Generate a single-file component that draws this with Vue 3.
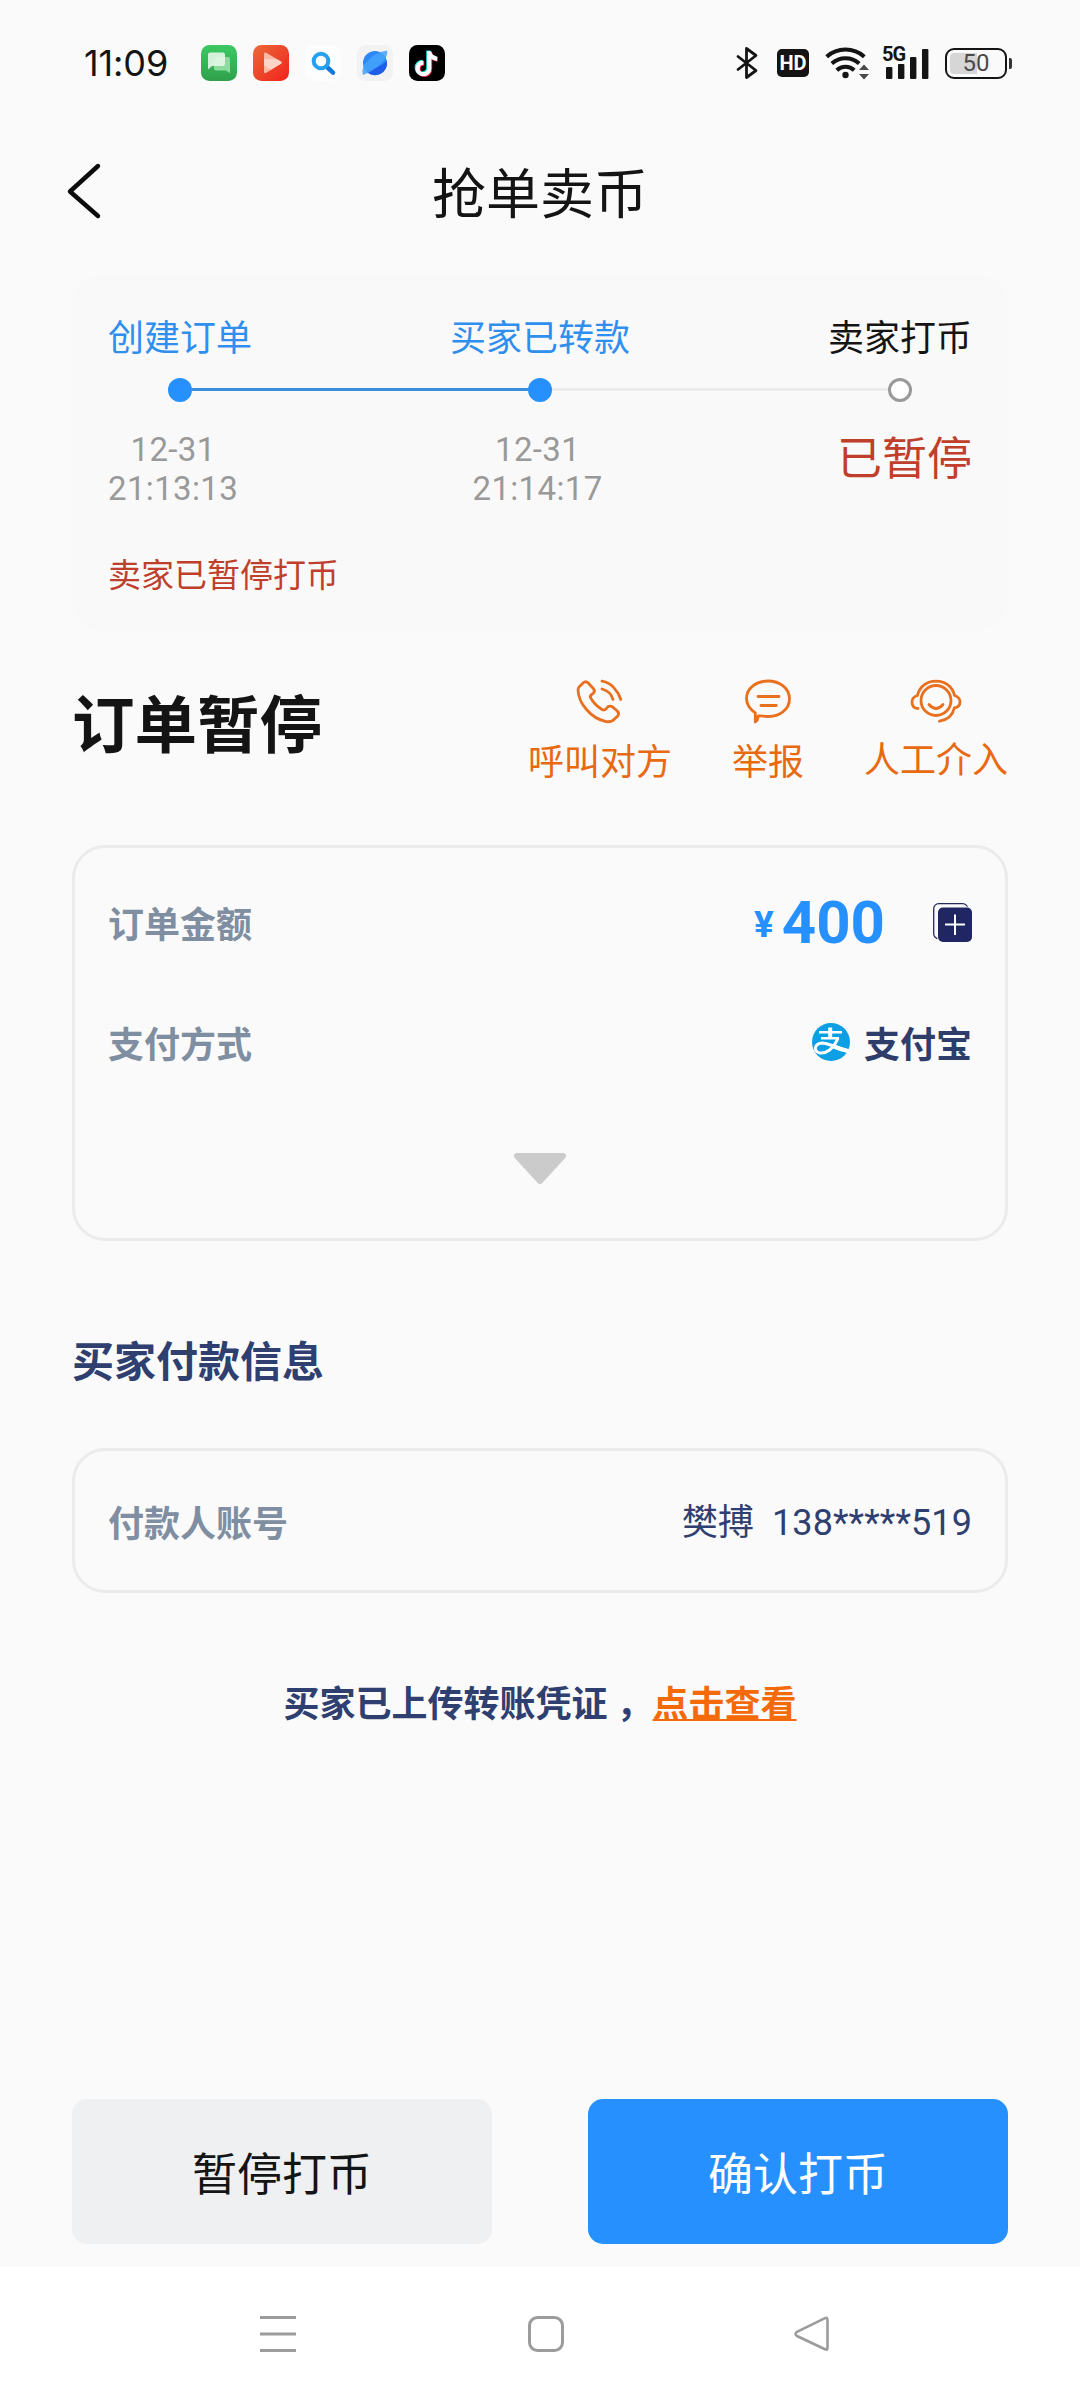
<script setup>
const steps = [
  { label: '创建订单', state: 'done' },
  { label: '买家已转款', state: 'done' },
  { label: '卖家打币', state: 'todo' },
]
</script>

<template>
  <div class="screen">
    <header class="status">
      <span class="clock">11:09</span>
      <div class="apps">
        <svg width="36" height="36" viewBox="0 0 36 36">
          <defs>
            <linearGradient id="msg" x1="0" y1="0" x2="0" y2="1">
              <stop offset="0" stop-color="#3cc864" /><stop offset="1" stop-color="#30a04c" />
            </linearGradient>
          </defs>
          <rect width="36" height="36" rx="8.5" fill="url(#msg)" />
          <path d="M15 12h12a2 2 0 0 1 2 2v14.300l-4-2.900H15a2 2 0 0 1-2-2V14z" fill="#8cdc9f" />
          <path d="M9 7.500h13a2 2 0 0 1 2 2V19a2 2 0 0 1-2 2H11l-4 3.500V9.500a2 2 0 0 1 2-2z" fill="#e2f6e6" fill-opacity=".92" />
        </svg>
        <svg width="36" height="36" viewBox="0 0 36 36">
          <defs>
            <linearGradient id="vid" x1="0" y1="0" x2="1" y2="1">
              <stop offset="0" stop-color="#ea6a38" /><stop offset="1" stop-color="#f0221c" />
            </linearGradient>
          </defs>
          <rect width="36" height="36" rx="8.500" fill="url(#vid)" />
          <path d="M11 9.200q0-2.600 2.300-1.400L28 16.400q1.800 1.200 0 2.400L13.300 27.700Q11 29 11 26.400z" fill="#fbb9a4" />
          <path d="M11 14L24 14.200 28 16.400q1.800 1.200 0 2.400L18 24.800 11 20z" fill="#fff" fill-opacity=".4" />
        </svg>
        <svg width="36" height="36" viewBox="0 0 36 36">
          <rect width="36" height="36" rx="8.500" fill="#fdfdfd" />
          <path d="M22 22l6 5.700" stroke="#1479d8" stroke-width="4.500" stroke-linecap="round" />
          <circle cx="16" cy="16" r="7.300" fill="none" stroke="#26a0f0" stroke-width="4" />
        </svg>
        <svg width="36" height="36" viewBox="0 0 36 36">
          <rect width="36" height="36" rx="8.500" fill="#f2f2f3" />
          <circle cx="18" cy="18" r="12" fill="#2f86f6" />
          <path d="M29.900 16a12 12 0 0 1-20.500 10.400Q22 23 29.900 16z" fill="#1f5cea" />
          <path d="M7 20Q17 7 30 5.600 32 11 24 18.500 15 27 6 30 4.500 26 7 20z" fill="#43a3f8" fill-opacity=".85" />
        </svg>
        <svg width="36" height="36" viewBox="0 0 36 36">
          <rect width="36" height="36" rx="8.500" fill="#000" />
          <g fill="none" stroke-width="4.200">
            <path d="M19.300 5.500v17.200a5.800 5.800 0 1 1-5.800-5.800M19.300 6.500q1.300 5.800 7.700 6.600" stroke="#25e8e4" />
            <path d="M21.100 7v17.200a5.800 5.800 0 1 1-5.800-5.800M21.100 8q1.300 5.800 7.700 6.600" stroke="#fb2c5a" />
            <path d="M20.200 6.200v17.200a5.800 5.800 0 1 1-5.800-5.800M20.200 7q1.300 6 7.900 6.800" stroke="#fff" />
          </g>
        </svg>
      </div>
      <div class="signals">
        <svg class="bt" width="23" height="34" viewBox="0 0 23 34">
          <path d="M2 10.500L20 24.500 10.500 31.500V2.500L20 9.500 2 23.500" fill="none" stroke="#141414" stroke-width="2.800" stroke-linejoin="round" stroke-linecap="round" />
        </svg>
        <span class="hd">HD</span>
        <svg class="wifi" width="46" height="36" viewBox="0 0 46 36">
          <g fill="none" stroke="#141414" stroke-width="4">
            <path d="M1.700 12.700a28.500 28.500 0 0 1 37.600 0" />
            <path d="M6.800 19.600a20.500 20.500 0 0 1 27.400 0" />
            <path d="M11.800 26.300a12.500 12.500 0 0 1 17.400 0" />
          </g>
          <circle cx="20.500" cy="31" r="3.200" fill="#141414" />
          <path d="M34 26l5-5.500 5 5.500zM34 30l5 5.500 5-5.500z" fill="#4a4a4a" />
        </svg>
        <div class="cell">
          <span class="gen">5G</span>
          <svg width="48" height="34" viewBox="0 0 48 34" fill="#141414">
            <rect x="3" y="21" width="6.400" height="12" rx="1" />
            <rect x="15" y="18" width="6.400" height="15" rx="1" />
            <rect x="27" y="11" width="6.400" height="22" rx="1" />
            <rect x="39" y="3" width="6.400" height="30" rx="1" />
          </svg>
        </div>
        <div class="battery"><span class="level"></span><span class="pct">50</span></div>
        <span class="nub"></span>
      </div>
    </header>

    <nav class="titlebar">
      <svg class="back" width="36" height="58" viewBox="0 0 36 58">
        <path d="M32 4L4 29.500 32 54" fill="none" stroke="#0c0c0c" stroke-width="4.400" stroke-linecap="round" stroke-linejoin="round" />
      </svg>
      <h1>抢单卖币</h1>
      <span class="back"></span>
    </nav>

    <section class="progress">
      <div class="labels">
        <span v-for="s in steps" :key="s.label" :class="s.state">{{ s.label }}</span>
      </div>
      <div class="track">
        <i class="dot"></i><i class="bar"></i><i class="dot"></i><i class="bar off"></i><i class="dot off"></i>
      </div>
      <div class="times">
        <span>12-31<br />21:13:13</span>
        <span>12-31<br />21:14:17</span>
        <b>已暂停</b>
      </div>
      <p class="note">卖家已暂停打币</p>
    </section>

    <section class="heading">
      <h2>订单暂停</h2>
      <div class="actions">
        <div class="action">
          <svg width="50" height="46" viewBox="0 0 50 46">
            <path d="M8.300 4.800Q10.700 2.600 13 4.800L18.500 10.700Q20.500 13 18.300 15.300L16.400 16.600Q14.500 18.300 16 20.600 20.500 28 27.500 31.700 29.400 32.500 31 31 L32.600 29Q35.200 27.200 37.500 28.900L42.300 33Q44.800 35.600 42.500 38.300L38 42.400Q35.500 44.200 31 43.600 19.500 41 11.500 31.500 3.500 22.500 3 12 3.200 9.600 4.500 8.500z" />
            <path d="M27 3.200Q34 4.500 38.800 9.600T45.800 21.500M27 11Q36 13.500 38 21.500" />
          </svg>
          <span>呼叫对方</span>
        </div>
        <div class="action">
          <svg width="50" height="46" viewBox="0 0 50 46">
            <path d="M12.300 44V34.800Q3.500 28.500 3.500 20.400C3.500 10 13.500 3 25 3S46.500 10 46.500 20.800 36 39.800 22.500 38.300 19 39 12.300 44z" />
            <path d="M15 18.500H36M18 27.500H33.300" />
          </svg>
          <span>举报</span>
        </div>
        <div class="action">
          <svg width="54" height="46" viewBox="0 0 54 46">
            <circle cx="27" cy="22.500" r="15" />
            <path d="M9 30.500C4 30.500 3 27 3 23.800 3 20 5.500 18.400 8.500 17.500 10.500 8.500 18 3.200 27 3.200S43.500 8.500 45.500 17.500C48.500 18.400 51 20 51 23.800 51 27.500 48.500 29.500 45.300 30 43.500 38 38 42 30.500 43.200M20 26.500Q27 34.500 34 26.500" />
          </svg>
          <span class="up">人工介入</span>
        </div>
      </div>
    </section>

    <section class="card order">
      <div class="row">
        <span class="key">订单金额</span>
        <div class="amount">
          <span class="yen">¥</span><span class="num">400</span>
          <svg width="39" height="39" viewBox="0 0 39 39">
            <rect x=".7" y=".7" width="34" height="35" rx="5" fill="none" stroke="#232a5c" stroke-width="1.300" />
            <rect x="4" y="3.500" width="35.500" height="36" rx="6" fill="#fafafa" />
            <rect x="5" y="4.500" width="34" height="34.500" rx="5" fill="#1f2663" />
            <path d="M12 21.500H32M22 11.500V32" stroke="#fff" stroke-width="2" />
          </svg>
        </div>
      </div>
      <div class="row second">
        <span class="key">支付方式</span>
        <div class="pay">
          <svg width="38" height="38" viewBox="0 0 38 38">
            <circle cx="19" cy="19" r="19" fill="#0c9fe4" />
            <g fill="none" stroke="#fff">
              <path d="M7 9.300H30M9 15.200H27" stroke-width="2.500" />
              <path d="M18.200 4.500V15" stroke-width="4" />
              <path d="M26 15Q23 22.500 17.500 27 13 30.500 8 30 3 29 3.400 24.500 4.500 20 10.500 19.900 14 20 20 22.500 28 26 36.800 28.300" stroke-width="3" />
              <path d="M22 23.500Q29 26.500 36.800 28.300" stroke-width="4.200" />
            </g>
          </svg>
          <span>支付宝</span>
        </div>
      </div>
      <svg class="more" width="54" height="34" viewBox="0 0 54 34">
        <path d="M4 4H50L27 29z" fill="#cbcbcb" stroke="#cbcbcb" stroke-width="6" stroke-linejoin="round" />
      </svg>
    </section>

    <h3>买家付款信息</h3>

    <section class="card payer">
      <span class="key">付款人账号</span>
      <span class="account">樊搏<span class="digits">&nbsp;&nbsp;138*****519</span></span>
    </section>

    <p class="proof">买家已上传转账凭证<span class="gap">&nbsp;</span>，<a>点击查看</a></p>

    <footer class="buttons">
      <button class="pause">暂停打币</button>
      <button class="confirm">确认打币</button>
    </footer>

    <div class="navbar">
      <svg width="40" height="40" viewBox="0 0 40 40">
        <path d="M2 3.500H38M2 20H38M2 36.500H38" />
      </svg>
      <svg width="40" height="40" viewBox="0 0 40 40">
        <rect x="3.500" y="3.500" width="33" height="33" rx="8" />
      </svg>
      <svg width="40" height="40" viewBox="0 0 40 40">
        <path d="M32 4.200Q34.500 2.800 34.500 6V33.500Q34.500 36.800 32 35.200L4 22Q1.200 20 4 17.800z" stroke-width="2.600" />
      </svg>
    </div>
  </div>
</template>

<style>
body {
  margin: 0;
  background: #fafafa;
}
</style>

<style scoped>
.screen {
  width: 1080px;
  height: 2400px;
  box-sizing: border-box;
  overflow: hidden;
  display: flex;
  flex-direction: column;
  background: #fafafa;
  color: #141414;
  font-family: "Noto Sans CJK SC", sans-serif;
}
h1, h2, h3, p {
  margin: 0;
  font-weight: 400;
}
svg {
  display: block;
  flex: none;
}

.status {
  height: 126px;
  box-sizing: border-box;
  padding: 0 68px 0 84px;
  display: flex;
  align-items: center;
  flex: none;
}
.clock {
  width: 117px;
  font: 400 36px/40px Inter, sans-serif;
  letter-spacing: -0.1px;
}
.apps {
  display: flex;
  gap: 16px;
}
.signals {
  margin-left: auto;
  display: flex;
  align-items: center;
}
.bt {
  margin-right: 18px;
}
.hd {
  width: 32px;
  height: 28px;
  margin-right: 16px;
  border-radius: 5px;
  background: #141414;
  color: #fff;
  font: 700 20px/28px Roboto, sans-serif;
  text-align: center;
}
.wifi {
  margin: -3px 12px 0 0;
}
.cell {
  width: 48px;
  height: 34px;
  margin-right: 14px;
  position: relative;
}
.gen {
  position: absolute;
  left: -1px;
  top: -2px;
  font: 700 20px/20px Roboto, sans-serif;
  letter-spacing: -1px;
}
.battery {
  position: relative;
  width: 62px;
  height: 31px;
  box-sizing: border-box;
  border: 2.500px solid #141414;
  border-radius: 9px;
  text-align: center;
}
.level {
  position: absolute;
  left: 3px;
  top: 3px;
  width: 27px;
  height: 21px;
  border-radius: 4px 0 0 4px;
  background: #d6d6d6;
}
.pct {
  position: relative;
  color: #4a4a4a;
  font: 400 24px/27px Roboto, sans-serif;
  display: block;
}
.nub {
  width: 3px;
  height: 11px;
  margin-left: 2px;
  border-radius: 0 2px 2px 0;
  background: #333;
}

.titlebar {
  height: 130px;
  margin-bottom: 19px;
  padding: 0 66px;
  display: flex;
  align-items: center;
  justify-content: space-between;
  flex: none;
}
.back {
  width: 36px;
}
h1 {
  font-size: 54px;
  line-height: 80px;
}

.progress {
  margin: 0 72px;
  height: 355px;
  box-sizing: border-box;
  padding: 35px 36px 0;
  border-radius: 30px;
  background: #f9f9f9;
  flex: none;
}
.labels {
  display: flex;
  justify-content: space-between;
  font-size: 36px;
  line-height: 50px;
}
.done {
  color: #2f8fee;
}
.track {
  display: flex;
  align-items: center;
  height: 24px;
  margin: 18px 60px 0;
}
.dot {
  width: 24px;
  height: 24px;
  border-radius: 50%;
  background: #2690ff;
  box-sizing: border-box;
}
.dot.off {
  background: #fff;
  border: 3px solid #999;
}
.bar {
  flex: 1;
  height: 3px;
  margin-top: -1px;
  background: #3a8fdd;
}
.bar.off {
  background: #ebebeb;
}
.times {
  display: flex;
  justify-content: space-between;
  margin-top: 28px;
  color: #999;
  text-align: center;
  font: 400 33px/39px Roboto, sans-serif;
  letter-spacing: 0.35px;
}
.times b {
  color: #bf3f2c;
  font: 400 45px/52px "Noto Sans CJK SC", sans-serif;
  letter-spacing: 0;
}
.note {
  margin-top: 40px;
  color: #bf3f2c;
  font-size: 33px;
  line-height: 50px;
}

.heading {
  margin: 45px 72px 0;
  height: 125px;
  display: flex;
  justify-content: space-between;
  flex: none;
}
h2 {
  font-size: 62.500px;
  line-height: 91px;
  font-weight: 700;
}
.actions {
  display: flex;
  gap: 60px;
}
.action {
  display: flex;
  flex-direction: column;
  align-items: center;
  color: #e8690f;
  font-size: 36px;
  line-height: 50px;
  padding-top: 3px;
}
.action svg {
  fill: none;
  stroke: #e8701f;
  stroke-width: 2.800px;
  stroke-linecap: round;
  stroke-linejoin: round;
  margin-bottom: 10px;
}
.action .up {
  margin-top: -2px;
}

.card {
  margin: 0 72px;
  box-sizing: border-box;
  border: 3px solid #ebebeb;
  border-radius: 33px;
  flex: none;
}
.order {
  margin-top: 45px;
  height: 396px;
  padding: 39px 33px 0;
}
.row {
  display: flex;
  align-items: center;
  justify-content: space-between;
  height: 70px;
}
.second {
  margin-top: 50px;
}
.key {
  color: #7f8ea1;
  font-size: 36px;
  font-weight: 700;
}
.amount {
  display: flex;
  align-items: center;
  color: #2690ff;
}
.yen {
  font: 700 37px/60px Roboto, sans-serif;
  padding-top: 5px;
  margin-right: 8px;
}
.num {
  font: 700 60px/60px Roboto, sans-serif;
  padding-top: 2px;
  margin-right: 48px;
}
.pay {
  display: flex;
  align-items: center;
  color: #2f3d6b;
  font-size: 36px;
  font-weight: 700;
}
.pay svg {
  margin-right: 14px;
}
.more {
  margin: 75px auto 0;
}

h3 {
  margin: 88px 72px 0;
  color: #2f3f70;
  font-size: 42px;
  font-weight: 700;
  line-height: 60px;
  flex: none;
}
.payer {
  margin-top: 59px;
  height: 145px;
  padding: 0 33px;
  display: flex;
  align-items: center;
  justify-content: space-between;
}
.account {
  color: #2f3f70;
  font-size: 36px;
  line-height: 50px;
}
.digits {
  font-family: Roboto, sans-serif;
  letter-spacing: 0.1px;
}
.proof {
  margin-top: 83px;
  color: #2f3f70;
  font-size: 36px;
  font-weight: 700;
  line-height: 50px;
  text-align: center;
  flex: none;
}
.gap {
  font-family: Roboto, sans-serif;
}
.proof a {
  color: #f56a08;
  text-decoration: underline;
  text-decoration-thickness: 2px;
  text-underline-offset: 2px;
  text-decoration-skip-ink: none;
}

.buttons {
  margin: auto 72px 23px;
  display: flex;
  justify-content: space-between;
  flex: none;
}
button {
  width: 420px;
  height: 145px;
  padding: 0;
  border: 0;
  border-radius: 15px;
  font: 400 45px/60px "Noto Sans CJK SC", sans-serif;
}
.pause {
  background: #eff0f2;
  color: #141414;
}
.confirm {
  background: #2690ff;
  color: #fff;
}

.navbar {
  height: 133px;
  box-sizing: border-box;
  padding: 0 247px 0 258px;
  display: flex;
  align-items: center;
  justify-content: space-between;
  background: #fff;
  flex: none;
}
.navbar svg {
  fill: none;
  stroke: #9c9c9c;
  stroke-width: 3px;
}
</style>
